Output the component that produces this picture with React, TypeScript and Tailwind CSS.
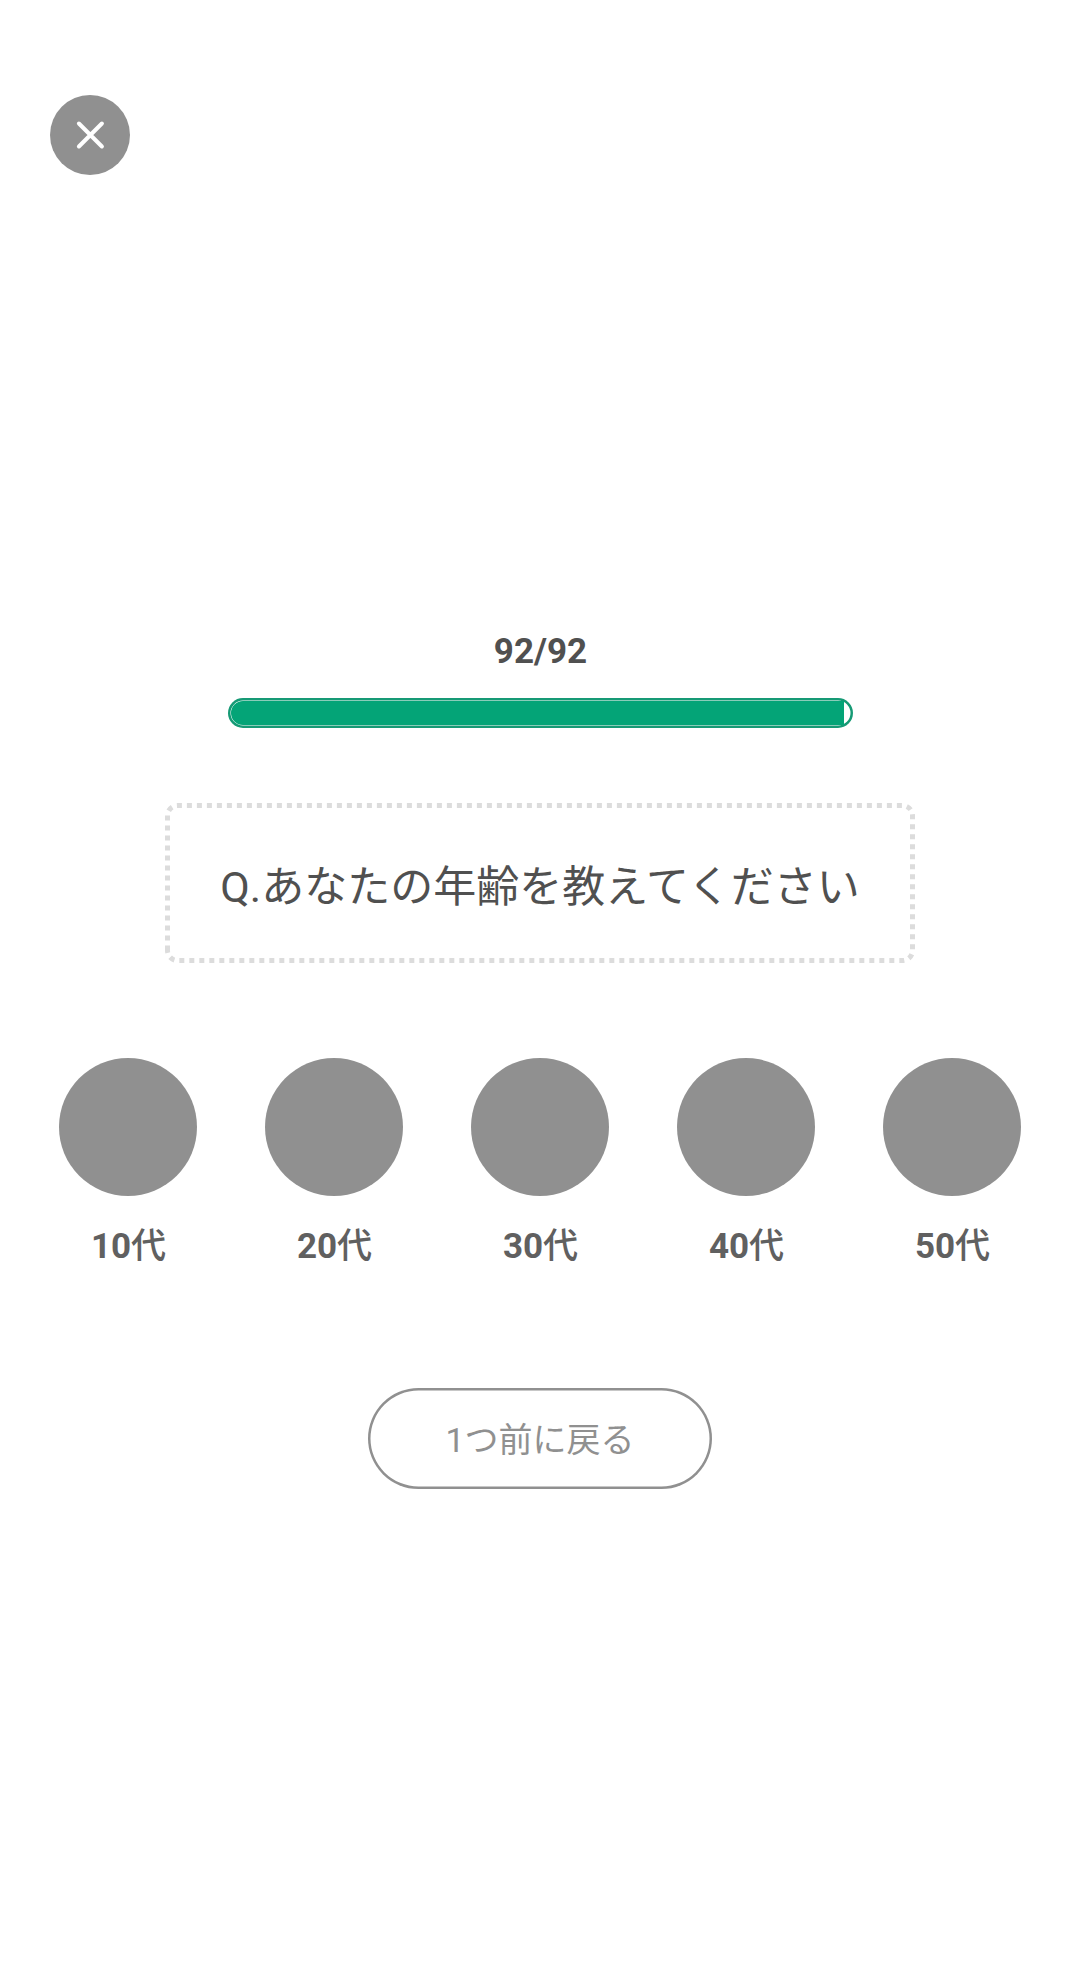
const QUESTION = {
  current: 92,
  total: 92,
  text: "Q.あなたの年齢を教えてください",
};

const AGES = ["10代", "20代", "30代", "40代", "50代"];

function CloseButton() {
  return (
    <button
      type="button"
      aria-label="閉じる"
      className="flex size-20 items-center justify-center rounded-full bg-[#909090]"
    >
      <svg
        className="size-[30px]"
        viewBox="0 0 30 30"
        fill="none"
        stroke="white"
        strokeWidth={4}
        strokeLinecap="round"
      >
        <path d="M3.9 3.5l23 23M26.9 3.5l-23 23" />
      </svg>
    </button>
  );
}

function Progress({ current, total }: { current: number; total: number }) {
  return (
    <div className="flex flex-col items-center">
      <p className="text-[35px] leading-[42px] font-bold text-[#505050]">
        {current}/{total}
      </p>
      <div className="mt-[25px] h-[30px] w-[625px] overflow-hidden rounded-full bg-white p-[3px] shadow-[inset_0_0_0_2.5px_#169a75]">
        <div
          className="h-full rounded-l-full bg-[#04a477]"
          style={{ width: `${(current / total) * 99}%` }}
        />
      </div>
    </div>
  );
}

function QuestionBox({ text }: { text: string }) {
  return (
    <div className="relative flex h-40 w-[750px] items-center justify-center">
      {/* square dots, 5px on / 5px off */}
      <svg
        className="absolute inset-0 size-full"
        viewBox="0 0 750 160"
        fill="none"
        stroke="#dcdcdc"
        strokeWidth={5}
        strokeDasharray="5 5"
      >
        <path d="M2.5 147.5V12.5A10 10 0 0 1 12.5 2.5H737.5A10 10 0 0 1 747.5 12.5V147.5A10 10 0 0 1 737.5 157.5H12.5A10 10 0 0 1 2.5 147.5Z" />
      </svg>
      <p className="pt-2 text-[43px] leading-[60px] whitespace-nowrap text-[#505050]">
        {text}
      </p>
    </div>
  );
}

function AgeOption({ label }: { label: string }) {
  return (
    <button type="button" className="flex w-[138px] flex-col items-center">
      <span className="size-[138px] rounded-full bg-[#909090]" />
      <span className="mt-[26px] pl-px text-[35px] leading-[50px] font-bold whitespace-nowrap text-[#606060]">
        {label.slice(0, -1)}
        <span className="font-medium">{label.slice(-1)}</span>
      </span>
    </button>
  );
}

export default function App() {
  return (
    <main className="flex h-[1970px] w-[1080px] flex-col items-center overflow-hidden bg-white font-[Roboto,'Noto_Sans_CJK_JP',sans-serif]">
      <div className="mt-[95px] w-full px-[50px]">
        <CloseButton />
      </div>

      <div className="mt-[456px] ml-px">
        <Progress current={QUESTION.current} total={QUESTION.total} />
      </div>

      <div className="mt-[75px]">
        <QuestionBox text={QUESTION.text} />
      </div>

      <div className="mt-[95px] flex gap-[68px]">
        {AGES.map((age) => (
          <AgeOption key={age} label={age} />
        ))}
      </div>

      <button
        type="button"
        className="mt-[116px] flex h-[101px] w-[344px] items-center justify-center rounded-full pt-[3px] text-[34px] leading-[50px] text-[#909090] shadow-[inset_0_0_0_2.5px_#909090]"
      >
        1つ前に戻る
      </button>
    </main>
  );
}
